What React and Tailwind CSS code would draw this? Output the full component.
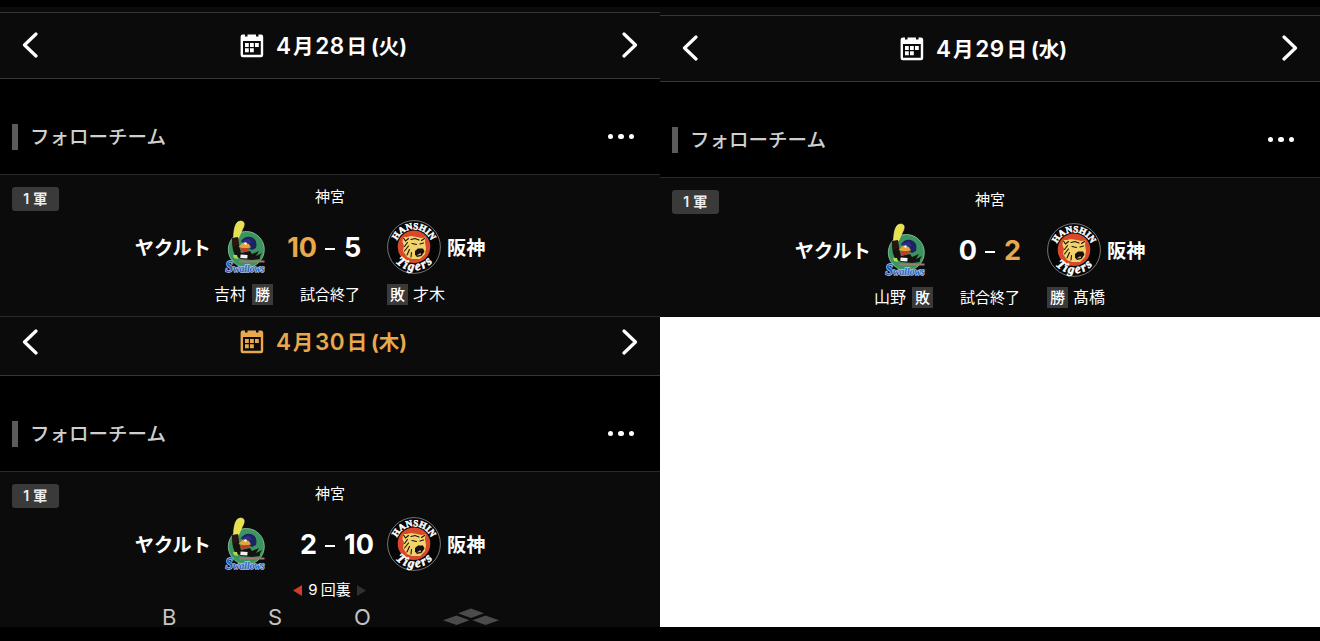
import React from 'react';

const SwallowsLogo = () => (
    <svg width="42" height="54" viewBox="0 0 42 54" className="shrink-0 overflow-visible">
        <circle cx="21.3" cy="29.5" r="18" fill="#3c9560" stroke="#8fc9a0" strokeWidth="0.8" />
        <path d="M7 19 Q7 33 11 36 L16 39 L27 40 L35 39 Q34 37 37 33 L31 36 L34 31 L27 34 L25 31 L16 33 L13 20Z" fill="#15130f" />
        <path d="M8.500 17.500 Q9 1 15.500 1 Q20.500 1 18.800 6.500 L13.500 18Z" fill="#e8e14e" stroke="#f3f09a" strokeWidth="0.6" />
        <path d="M7 18 L13 17 L14 24 L8.500 27Z" fill="#2a160e" />
        <path d="M16 21 Q20 15.500 26 17 Q33 19 31 28 L27 30 L22 27Z" fill="#1d2260" />
        <path d="M15.500 21.500 L24 18.500 L27 23 L20 24Z" fill="#2b3180" />
        <path d="M13.500 27 L18 22.500 L24 24 L26 27.500 L20 28.500Z" fill="#e5a63a" />
        <path d="M14.500 28.500 L22 28 L25.500 29.500 L18 32.500Z" fill="#c8372c" />
        <circle cx="20.500" cy="23.500" r="1.200" fill="#fff" />
        <path d="M8 35 L12 35 L13 39 L9 38Z" fill="#b3d84b" />
        <rect x="15.500" y="34.800" width="7" height="3.500" fill="#f2f2f2" transform="rotate(5 19 36)" />
        <rect x="14" y="40.500" width="25.500" height="2" fill="#9a7b72" />
        <g
            className="font-['Liberation_Serif',serif] leading-none font-bold italic"
            fill="#1d5fbd"
            stroke="#b9cdea"
            strokeWidth="1.400"
            strokeLinejoin="round"
            paintOrder="stroke"
        >
            <text x="0.5" y="51.500" textLength="39" lengthAdjust="spacingAndGlyphs" className="text-[11px]">
                <tspan className="text-[16px]">S</tspan>
                <tspan>wallows</tspan>
            </text>
        </g>
    </svg>
);

const TigersLogo = () => (
    <svg width="54" height="54" viewBox="0 0 54 54" className="shrink-0 overflow-visible">
        <defs>
            <path id="tigersTop" d="M8.800 27.500 A18.200 18.200 0 0 1 45.200 27.500" />
            <path id="tigersBottom" d="M2.500 26 A24.500 24.500 0 0 0 51.500 26" />
        </defs>
        <circle cx="27" cy="27" r="26.400" fill="#050505" stroke="#a5a5a5" strokeWidth="0.7" />
        <circle cx="27" cy="26.800" r="16.300" fill="#d9482b" />
        <path d="M16 17 L20 17 L24 16 L30 17 L34 18 L38.500 17.500 L38 22 L39 28 L38 34 L33 39 L25 39 L20 37 L16 31 L17 26 L15.500 22Z" fill="#f2d26a" />
        <g fill="none" stroke="#17120d" strokeWidth="1.100" strokeLinecap="round">
            <path d="M16.500 18 L18.500 21 L21.500 18.500" />
            <path d="M24 19.500 L28 18.500 L32 20" />
            <path d="M17.500 26.500 L20.500 22.500" />
            <path d="M17.500 31 L21.500 26" />
            <path d="M20 35 L22.500 29.500" />
            <path d="M24 37 L24.500 32.500" />
            <path d="M25 23.500 L29.500 24.500" />
            <path d="M33 24 L36.500 23" />
            <path d="M34.500 20.500 L37.500 18.500" />
        </g>
        <path d="M28 31 L31 28.500 L36 28.500 L37.500 31.500 L34.500 36 L30 37 L28 34.500Z" fill="#15110d" />
        <path d="M29.500 35.500 L33.500 33 L34 35Z" fill="#e7a79a" />
        <text className="font-['Liberation_Serif',serif] text-[9.5px] leading-none font-bold" fill="#fff" stroke="#fff" strokeWidth="0.5" textAnchor="middle">
            <textPath href="#tigersTop" startOffset="50%" textLength="43" lengthAdjust="spacingAndGlyphs">HANSHIN</textPath>
        </text>
        <text className="font-['Liberation_Serif',serif] text-[13px] leading-none font-bold italic" fill="#fff" stroke="#fff" strokeWidth="0.5" textAnchor="middle">
            <textPath href="#tigersBottom" startOffset="50%" textLength="42">Tigers</textPath>
        </text>
    </svg>
);

const CalendarIcon = () => (
    <svg width="24" height="24" viewBox="0 0 24 24" fill="currentColor">
        <path
            fillRule="evenodd"
            d="M2.800 0.500 H5 V2.500 H7.500 V0.500 H16 V2.500 H18.500 V0.500 H21 Q23.200 0.500 23.200 2.700 V21 Q23.200 23.200 21 23.200 H2.800 Q0.600 23.200 0.600 21 V2.700 Q0.600 0.500 2.800 0.500Z M3 7 V20.800 H20.800 V7Z"
        />
        <path d="M5 9 H8.800 V13 H5Z M10 9 H13.800 V13 H10Z M15 9 H18.800 V13 H15Z M5 14.300 H8.800 V18.300 H5Z M10 14.300 H13.800 V18.300 H10Z" />
    </svg>
);

const Chevron = ({ flip }) => (
    <svg width="16" height="26" viewBox="0 0 16 26" className={flip ? '-mt-px rotate-180' : '-mt-px'}>
        <path d="M14 2 L2.500 13 L14 24" fill="none" stroke="#fff" strokeWidth="3.200" strokeLinecap="round" strokeLinejoin="round" />
    </svg>
);

const DateHeader = ({ month, day, weekday, className }) => (
    <div className={`flex shrink-0 items-center justify-between border-[#363638] bg-[#0b0b0b] px-[22px] ${className}`}>
        <Chevron />
        <div className="flex items-center gap-3 pr-[13px]">
            <CalendarIcon />
            <h2 className="mt-px flex w-[131px] items-baseline justify-between whitespace-nowrap text-[20.5px] leading-6 font-bold">
                <span className="text-[22.5px] font-semibold">{month}</span>
                <span>月</span>
                <span className="text-[22.5px] font-semibold tracking-[0.5px]">{day}</span>
                <span>日</span>
                <span className="ml-0.5">({weekday})</span>
            </h2>
        </div>
        <Chevron flip />
    </div>
);

const FollowHeader = () => (
    <div className="flex h-[95px] shrink-0 items-center justify-between bg-black px-3 pt-5">
        <div className="flex items-center gap-3">
            <div className="h-[26px] w-1.5 bg-[#5b5b5b]" />
            <h3 className="text-[19.5px] leading-6 font-medium text-[#cfcfcf]">フォローチーム</h3>
        </div>
        <div className="mr-3.5 flex gap-[5px]">
            {[0, 1, 2].map((i) => (
                <span key={i} className="size-[5.5px] rounded-full bg-white" />
            ))}
        </div>
    </div>
);

const Mark = ({ children }) => (
    <span className="flex size-[21px] items-center justify-center bg-[#3a3a3a] text-[15px] leading-none font-medium">{children}</span>
);

const Pitchers = ({ home, away }) => (
    <div className="mt-[10px] flex h-[21px] items-center text-base leading-5">
        <div className="flex w-[273px] items-center justify-end gap-1.5">
            <span className="-mt-px">{home.pitcher}</span>
            <Mark>{home.mark}</Mark>
        </div>
        <span className="w-[114px] text-center text-[15px]">試合終了</span>
        <div className="flex items-center gap-[5px]">
            <Mark>{away.mark}</Mark>
            <span className="-mt-px">{away.pitcher}</span>
        </div>
    </div>
);

const LiveStatus = () => (
    <div className="mt-[7px]">
        <div className="flex h-6 items-center justify-center gap-1.5 pr-px text-[15px] leading-5">
            <svg width="9" height="11" viewBox="0 0 9 11"><path d="M9 0 V11 L0 5.500Z" fill="#d23a2a" /></svg>
            <span className="flex gap-[3px]"><span>9</span><span>回裏</span></span>
            <svg width="9" height="11" viewBox="0 0 9 11"><path d="M0 0 V11 L9 5.500Z" fill="#303030" /></svg>
        </div>
        <div className="flex h-[25px] items-center pt-[5px] pl-[162px] text-[22px] leading-[18px] text-[#c4c4c4]">
            <span className="w-[106px]">B</span>
            <span className="w-[86px]">S</span>
            <span className="w-[89px]">O</span>
            <svg width="56" height="18" viewBox="0 0 56 18" fill="#4b4b4b">
                <path d="M28 0.500 L41 5.200 L28 10 L15 5.200Z M13.500 7.500 L26.500 12.200 L13.500 17 L0 12.200Z M42.500 7.500 L56 12.200 L42.500 17 L29.500 12.200Z" />
            </svg>
        </div>
    </div>
);

const GameCard = ({ home, away, live, className }) => (
    <div className={`shrink-0 overflow-hidden border-t border-[#29292c] bg-[#0b0b0b] pt-3 ${className}`}>
        <div className="grid h-6 grid-cols-[1fr_auto_1fr] px-3">
            <span className="flex h-[24px] w-[46.5px] items-center justify-center gap-1 rounded-[3px] bg-[#3a3a3a] text-[14px] leading-none font-bold text-[#eeeeee]">
                <span className="font-semibold">1</span>軍
            </span>
            <span className="text-[15px] leading-5">神宮</span>
        </div>
        <div className="mt-[9px] flex h-[54px] items-center">
            <span className="mt-px w-[211px] text-right text-[19.2px] leading-6 font-bold">ヤクルト</span>
            <div className="ml-[14px] flex items-center">
                <SwallowsLogo />
                <div className="grid w-[120px] grid-cols-[50px_26px_44px] items-center pt-px text-[27px] leading-8 font-bold">
                    <span className={`text-right ${home.win ? 'text-[#e9a84c]' : ''}`}>{home.score}</span>
                    <span className="mx-auto mt-[3px] h-[2.5px] w-[10px] bg-white" />
                    <span className={`pl-px ${away.win ? 'text-[#e9a84c]' : ''}`}>{away.score}</span>
                </div>
                <TigersLogo />
            </div>
            <span className="mt-px ml-[6px] text-[19.2px] leading-6 font-bold">阪神</span>
        </div>
        {live ? <LiveStatus /> : <Pitchers home={home} away={away} />}
    </div>
);

export default function App() {
    return (
        <div className="h-[641px] w-[1320px] overflow-hidden bg-black font-['Inter','Noto_Sans_CJK_JP',sans-serif] text-white">
            <div className="grid h-[627px] grid-cols-2 grid-rows-[317px_310px]">
                <section className="flex flex-col overflow-hidden pt-[7px]">
                    <div className="h-[5px] shrink-0 bg-[#0b0b0b]" />
                    <DateHeader month="4" day="28" weekday="火" className="h-[67px] border-y" />
                    <FollowHeader />
                    <GameCard
                        className="h-[143px] border-b"
                        home={{ score: 10, win: true, pitcher: '吉村', mark: '勝' }}
                        away={{ score: 5, pitcher: '才木', mark: '敗' }}
                    />
                </section>

                <section className="flex flex-col overflow-hidden pt-[7px]">
                    <div className="h-[8px] shrink-0 bg-[#0b0b0b]" />
                    <DateHeader month="4" day="29" weekday="水" className="h-[67px] border-y" />
                    <FollowHeader />
                    <GameCard
                        className="h-[140px]"
                        home={{ score: 0, pitcher: '山野', mark: '敗' }}
                        away={{ score: 2, win: true, pitcher: '髙橋', mark: '勝' }}
                    />
                </section>

                <section className="flex flex-col overflow-hidden">
                    <DateHeader month="4" day="30" weekday="木" className="h-[59px] border-b pb-2 text-[#e9a84c]" />
                    <FollowHeader />
                    <GameCard className="h-[156px]" home={{ score: 2 }} away={{ score: 10 }} live />
                </section>

                <div className="bg-white" />
            </div>
        </div>
    );
}
